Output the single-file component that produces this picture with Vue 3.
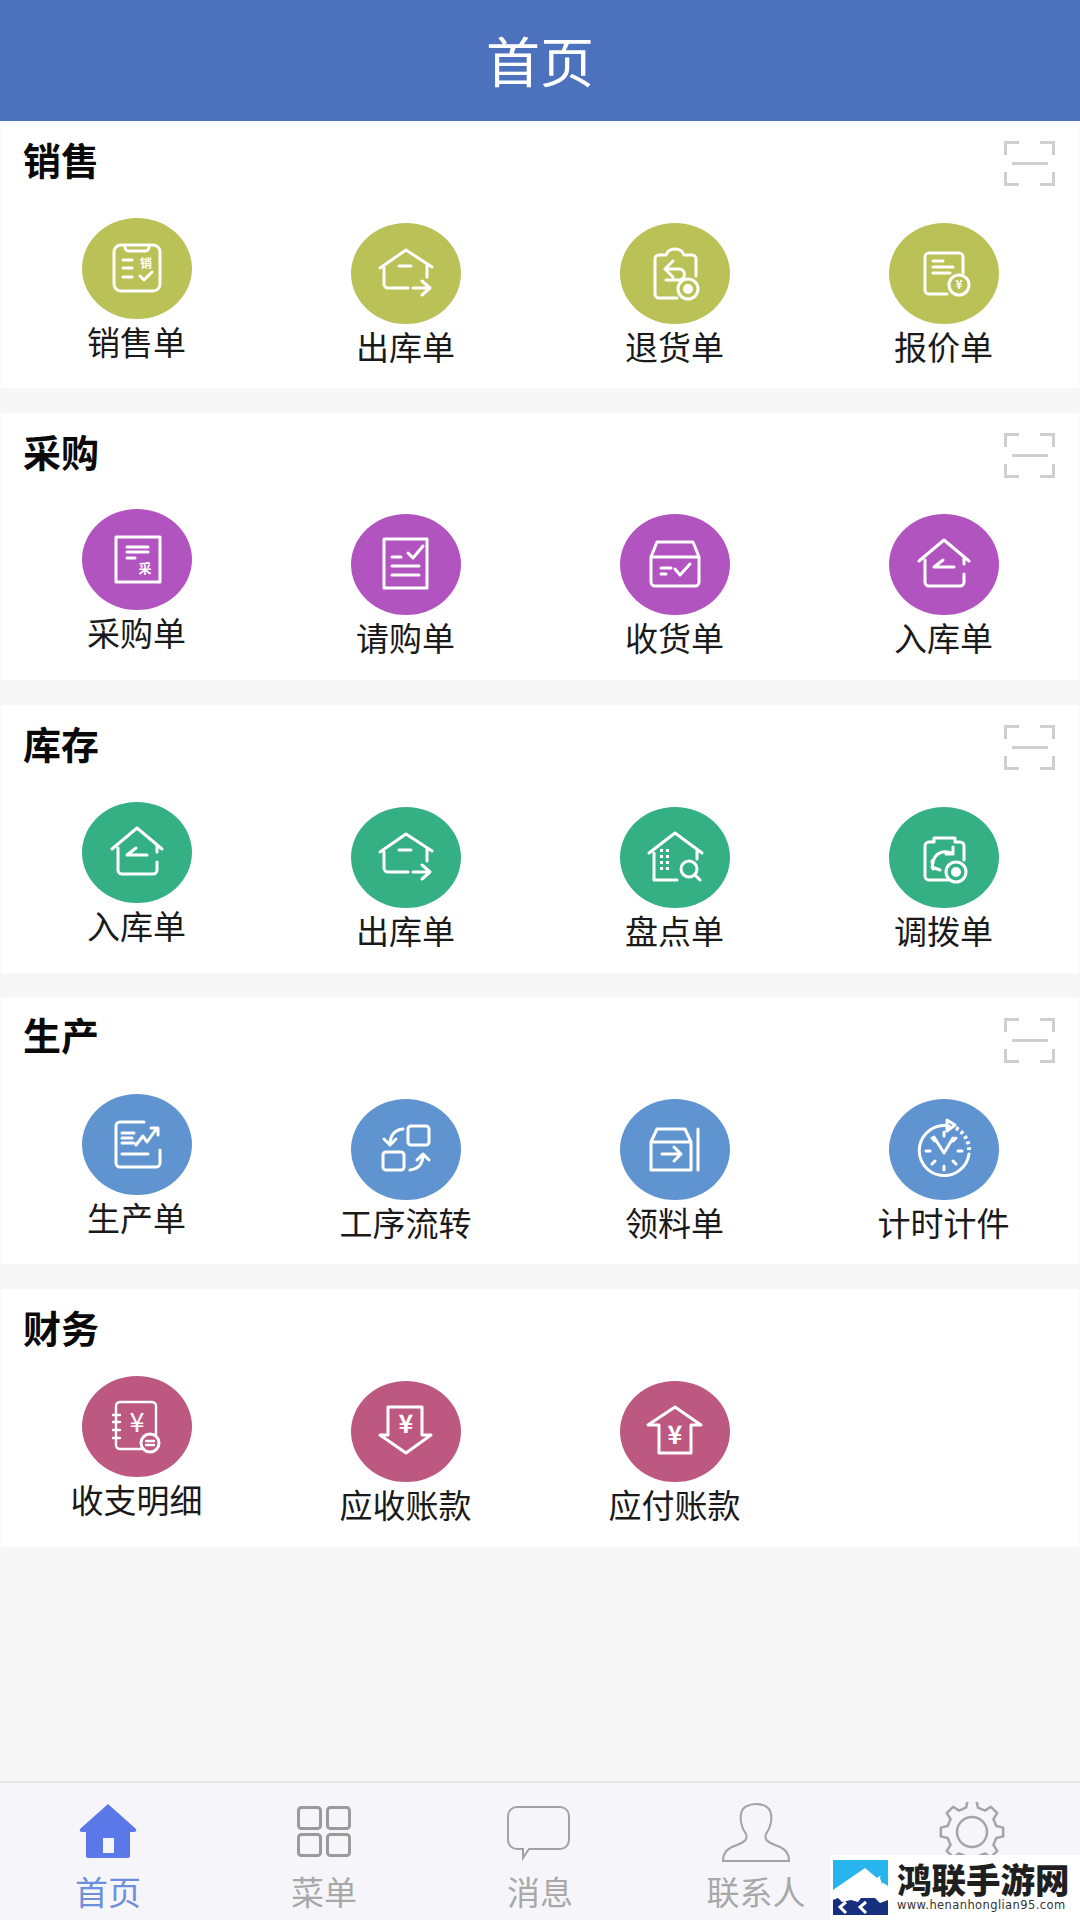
<script setup>
const icons = {
  sales: { s: 'M39 27h32a7 7 0 0 1 7 7v32a7 7 0 0 1-7 7H39a7 7 0 0 1-7-7V34a7 7 0 0 1 7-7z M43 27v2a4 4 0 0 0 4 4h16a4 4 0 0 0 4-4v-2 M41 42h9 M41 50h9 M41 59h9 M58 58l4 4 8-8', t: [[64, 50, 12, '销']] },
  outHouse: { s: 'M33 45V61a4 4 0 0 0 4 4h20 M29 45L55 27l26 17 M76 41V54 M48 43h12 M62 65h16 M71 58l8 7-8 7' },
  returned: { s: 'M46 32h-7a4 4 0 0 0-4 4v35a4 4 0 0 0 4 4h18 M46 32c1-3 3-6 9-6s8 3 9 6h8a4 4 0 0 1 4 4v17 M53 38l-8 8 8 8 M45 46h14a5 5 0 0 1 0 11H46', c: [[68, 66, 10]], cf: [[68, 66, 5]] },
  quote: { s: 'M74 50V34a4 4 0 0 0-4-4H40a4 4 0 0 0-4 4v33a4 4 0 0 0 4 4h18 M44 38h10 M44 44h20 M44 50h17', c: [[70, 62, 10]], t: [[70, 66, 12, '¥']] },
  purchase: { s: 'M34 28h44v45H34z M45 38h21 M45 43h21 M45 49h8', t: [[63, 64, 13, '采']] },
  request: { s: 'M33 25h43v49H33z M41 43h9 M57 39l5 5 10-12 M41 52h27 M41 61h27' },
  receive: { s: 'M37 28h36l6 15v25a4 4 0 0 1-4 4H35a4 4 0 0 1-4-4V43z M31 43h48 M41 54h10 M41 60h5 M55 55l5 6 10-11' },
  inHouse: { s: 'M36 46V68a4 4 0 0 0 4 4h31a4 4 0 0 0 4-4V60 M30 47L55 26l25 21 M75 43V50 M54 46l-9 7h20' },
  stock: { s: 'M34 46V73h23 M29 46L55 26l27 20 M77 42V52 M75 68l5 5', c: [[69, 62, 8]], f: 'M40 42h3v3h-3z M46 42h3v3h-3z M40 48h3v3h-3z M46 48h3v3h-3z M40 54h3v3h-3z M46 54h3v3h-3z M40 60h3v3h-3z M46 60h3v3h-3z' },
  transfer: { s: 'M45 35h-5a4 4 0 0 0-4 4v30a4 4 0 0 0 4 4h19 M45 35v-4h21v4 M66 35h5a4 4 0 0 1 4 4v14 M44 56c1-10 11-14 20-9 M64 40v7h-7 M44 62l-1-8 M43 60l8 3', c: [[67, 65, 10]], cf: [[67, 65, 5]] },
  produce: { s: 'M62 28H38a4 4 0 0 0-4 4v37a4 4 0 0 0 4 4h36a4 4 0 0 0 4-4V56 M40 39h12 M40 44h10 M40 49h12 M40 60h26 M54 51l7-9 4 6 10-14 M69 34h7v7' },
  flow: { s: 'M60 27h15a3 3 0 0 1 3 3v13a3 3 0 0 1-3 3H60a3 3 0 0 1-3-3V30a3 3 0 0 1 3-3z M35 53h15a3 3 0 0 1 3 3v12a3 3 0 0 1-3 3H35a3 3 0 0 1-3-3V56a3 3 0 0 1 3-3z M52 30c-9 1-13 7-13 16 M33 40l6 6 6-6 M59 71c9-1 13-7 13-16 M66 61l6-6 6 6' },
  material: { s: 'M37 30h28l6 13v28H31V43z M31 43h40 M78 30v41 M42 55h19 M54 48l7 7-7 7' },
  clock: { s: 'M60 27A25 25 0 1 0 80 55 M58 21l8 5-8 6z M55 33v4 M55 67v4 M37 52h4 M69 52h4 M43 39l3 3 M67 39l-3 3 M43 65l3-3 M67 65l-3-3 M45 38l10 16 9-15', dash: 'M67 29A25 25 0 0 1 80 51' },
  ledger: { s: 'M34 30a4 4 0 0 1 4-4h32a4 4 0 0 1 4 4v28 M34 30v39a4 4 0 0 0 4 4h21 M31 39h7 M31 46h7 M31 54h7 M31 62h7 M64 65h8 M64 69h8', c: [[68, 67, 9]], t: [[55, 56, 27, '¥']], thin: true },
  receivable: { s: 'M37 26h34v28h9L55 72 29 54h8z', t: [[55, 52, 25, '¥']] },
  payable: { s: 'M55 26L81 44h-10v28H39V44H28z', t: [[55, 63, 25, '¥']] },
}

const sections = [
  { title: '销售', color: '#b9c157', scan: true, items: [['销售单', 'sales'], ['出库单', 'outHouse'], ['退货单', 'returned'], ['报价单', 'quote']] },
  { title: '采购', color: '#b254c0', scan: true, items: [['采购单', 'purchase'], ['请购单', 'request'], ['收货单', 'receive'], ['入库单', 'inHouse']] },
  { title: '库存', color: '#35b084', scan: true, items: [['入库单', 'inHouse'], ['出库单', 'outHouse'], ['盘点单', 'stock'], ['调拨单', 'transfer']] },
  { title: '生产', color: '#6094d0', scan: true, items: [['生产单', 'produce'], ['工序流转', 'flow'], ['领料单', 'material'], ['计时计件', 'clock']] },
  { title: '财务', color: '#bd5980', scan: false, items: [['收支明细', 'ledger'], ['应收账款', 'receivable'], ['应付账款', 'payable']] },
]

const gearPath = (() => {
  const cx = 35, cy = 30, teeth = 8
  const pts = []
  for (let i = 0; i < teeth; i++) {
    const a = (i / teeth) * Math.PI * 2 - Math.PI / 2
    const w = Math.PI / teeth
    const add = (r, o) => pts.push(`${(cx + r * Math.cos(a + o)).toFixed(1)} ${(cy + r * Math.sin(a + o)).toFixed(1)}`)
    add(25, -w * 0.62)
    add(31.5, -w * 0.36)
    add(31.5, w * 0.36)
    add(25, w * 0.62)
  }
  return 'M' + pts.join('L') + 'Z'
})()
</script>

<template>
  <div class="page">
    <header class="top">首页</header>
    <main class="main">
      <section v-for="(sec, i) in sections" :key="sec.title" class="section" :class="'sec-' + i">
        <div class="head">
          <h2 class="title">{{ sec.title }}</h2>
          <svg v-if="sec.scan" class="scan" width="51" height="45" viewBox="0 0 51 45">
            <path d="M1.5 14V1.5H15 M36 1.5h13.5V14 M1.5 31v12.5H15 M36 43.5h13.5V31" />
            <path d="M8 22.5h36" />
          </svg>
        </div>
        <div class="grid">
          <div v-for="it in sec.items" :key="it[0]" class="item">
            <svg class="disc" width="110" height="101" viewBox="0 0 110 101">
              <ellipse cx="55" cy="50.5" rx="55" ry="50.5" :fill="sec.color" />
              <path class="line" :class="{ thin: icons[it[1]].thin }" :d="icons[it[1]].s" />
              <path v-if="icons[it[1]].dash" class="line dash" :d="icons[it[1]].dash" />
              <path v-if="icons[it[1]].f" class="solid" :d="icons[it[1]].f" />
              <circle v-for="(c, n) in icons[it[1]].c || []" :key="'c' + n" class="line" :cx="c[0]" :cy="c[1]" :r="c[2]" />
              <circle v-for="(c, n) in icons[it[1]].cf || []" :key="'f' + n" class="solid" :cx="c[0]" :cy="c[1]" :r="c[2]" />
              <text v-for="(t, n) in icons[it[1]].t || []" :key="'t' + n" class="glyph" :class="{ light: icons[it[1]].thin }" :x="t[0]" :y="t[1]" :font-size="t[2]">{{ t[3] }}</text>
            </svg>
            <div class="label">{{ it[0] }}</div>
          </div>
        </div>
      </section>
    </main>
    <nav class="tabs">
      <div class="tab on">
        <svg width="70" height="60" viewBox="0 0 70 60">
          <path fill="#5b78e8" fill-rule="evenodd" d="M35 2L63 27q1 3-2 3h-4v24q0 2-2 2H15q-2 0-2-2V30H9q-3 0-2-3z M30 36v15h11V36z" />
        </svg>
        <span>首页</span>
      </div>
      <div class="tab">
        <svg class="outline heavy" width="70" height="60" viewBox="0 0 70 60">
          <rect x="9.5" y="5.5" width="22" height="21" rx="3" />
          <rect x="38.5" y="5.5" width="22" height="21" rx="3" />
          <rect x="9.5" y="32.5" width="22" height="21" rx="3" />
          <rect x="38.5" y="32.5" width="22" height="21" rx="3" />
        </svg>
        <span>菜单</span>
      </div>
      <div class="tab">
        <svg class="outline" width="70" height="60" viewBox="0 0 70 60">
          <path d="M12 5h43a9 9 0 0 1 9 9v24a9 9 0 0 1-9 9H24l-6 9v-9h-6a9 9 0 0 1-9-9V14a9 9 0 0 1 9-9z" />
        </svg>
        <span>消息</span>
      </div>
      <div class="tab">
        <svg class="outline" width="70" height="60" viewBox="0 0 70 60">
          <path d="M2 59c0-9 5-13 14-16 8-3 11-6 9-11-4-6-6-14-5-20C21 5 28 2 35 2s14 3 15 10c1 6-1 14-5 20-2 5 1 8 9 11 9 3 14 7 14 16z" />
        </svg>
        <span>联系人</span>
      </div>
      <div class="tab">
        <svg class="outline gear" width="70" height="60" viewBox="0 0 70 60">
          <path :d="gearPath" stroke-linejoin="round" />
          <circle cx="35" cy="30" r="15" />
        </svg>
      </div>
    </nav>
    <aside class="mark">
      <svg class="logo" width="55" height="55" viewBox="0 0 55 55">
        <rect width="55" height="55" fill="#28b5ee" />
        <path d="M0 30L32 8l12 10 4-3 1 7 6 4v29H0z" fill="#fff" />
        <path d="M0 40l5-2 4 4 9-2 7 2 3-4h14l5 5 8-3v15H0z" fill="#17307f" />
        <path d="M48 13l4 6-3 5-2-6z" fill="#28b5ee" />
        <path d="M13 42l-6 5 6 6 M33 42l-6 5 6 6" fill="none" stroke="#fff" stroke-width="3" />
      </svg>
      <div class="brand">
        <div class="name">鸿联手游网</div>
        <div class="url">www.henanhonglian95.com</div>
      </div>
    </aside>
  </div>
</template>

<style>
html, body { margin: 0; background: #f7f7f7; }
</style>

<style scoped>
.page {
  position: relative;
  width: 1080px;
  height: 1920px;
  display: flex;
  flex-direction: column;
  overflow: hidden;
  background: #f7f7f7;
  font-family: "Noto Sans CJK SC", "Liberation Sans", sans-serif;
}
.top {
  height: 121px;
  flex: none;
  background: #4c71bd;
  color: #fff;
  font-size: 54px;
  line-height: 120px;
  text-align: center;
}
.main { flex: 1; }
.section {
  margin: 0 0 25px;
  background: #fff;
  box-sizing: border-box;
  border: solid #fbfbfb;
  border-width: 0 2px;
}
.sec-0, .sec-1 { height: 267px; }
.sec-2 { height: 268px; }
.sec-3 { height: 266px; }
.sec-4 { height: 258px; }
.head {
  height: 78px;
  display: flex;
  justify-content: space-between;
  align-items: flex-start;
  padding: 0 23px 0 21px;
}
.title {
  margin: 0;
  font-size: 38px;
  font-weight: 700;
  line-height: 75px;
  color: #0a0a0a;
}
.sec-3 .title { line-height: 72px; }
.scan { margin-top: 20px; fill: none; stroke: #cfcfcf; stroke-width: 3; }
.grid {
  display: grid;
  grid-template-columns: repeat(4, 269px);
  margin-top: 19px;
}
.sec-1 .grid, .sec-3 .grid { margin-top: 18px; }
.sec-4 .grid { margin-top: 9px; }
.item {
  display: flex;
  flex-direction: column;
  align-items: center;
  padding-top: 5px;
}
.item:first-child { padding-top: 0; }
.disc { display: block; }
.line {
  fill: none;
  stroke: #fff;
  stroke-width: 3;
  stroke-linecap: round;
  stroke-linejoin: round;
}
.line.thin { stroke-width: 2.4; }
.dash { stroke-dasharray: 3 3; stroke-linecap: butt; stroke-width: 4; }
.solid { fill: #fff; }
.glyph {
  fill: #fff;
  font-family: "Noto Sans CJK SC", "Liberation Sans", sans-serif;
  font-weight: 700;
  text-anchor: middle;
}
.glyph.light { font-weight: 400; }
.label {
  margin-top: 3px;
  font-size: 33px;
  line-height: 38px;
  color: #1a1a1a;
}
.tabs {
  height: 139px;
  flex: none;
  box-sizing: border-box;
  border-top: 2px solid #e8e8ea;
  background: #f6f6fa;
  display: grid;
  grid-template-columns: repeat(5, 216px);
}
.tab {
  display: flex;
  flex-direction: column;
  align-items: center;
  padding-top: 19px;
  color: #a8a8a8;
  font-size: 33px;
  line-height: 38px;
}
.tab svg { display: block; margin-bottom: 10px; }
.tab.on { color: #6c8fdb; }
.outline { fill: none; stroke: #a2a2a2; stroke-width: 2; }
.outline.heavy { stroke: #9a9a9a; stroke-width: 3; }
.outline.gear { stroke: #a5a5a5; stroke-width: 2.5; }
.mark {
  position: absolute;
  left: 830px;
  top: 1855px;
  width: 250px;
  height: 65px;
  background: #fff;
  display: flex;
  align-items: flex-start;
  box-sizing: border-box;
  padding: 5px 0 0 3px;
}
.logo { flex: none; display: block; }
.brand { margin-left: 9px; }
.name {
  font-size: 34.5px;
  font-weight: 900;
  line-height: 36px;
  color: #1f1f1f;
  white-space: nowrap;
}
.url {
  margin-top: 3px;
  font-family: "DejaVu Sans", sans-serif;
  font-size: 11.5px;
  line-height: 13px;
  letter-spacing: 0.4px;
  color: #333;
  white-space: nowrap;
}
</style>
